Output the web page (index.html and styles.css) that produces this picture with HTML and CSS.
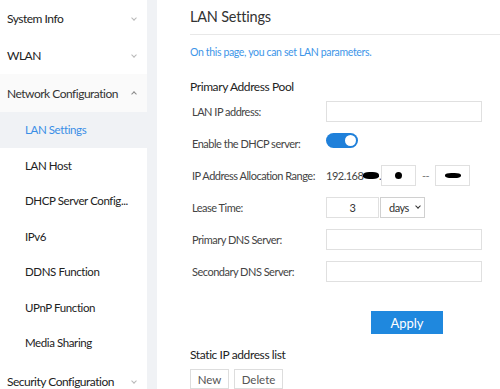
FILE: index.html
```html
<!DOCTYPE html>
<html lang="en">
<head>
  <meta charset="UTF-8" />
  <title>LAN Settings</title>
  <link rel="stylesheet" href="styles.css">
</head>
<body>

  <!-- Side menu -->
  <nav class="sidebar">
    <div class="menu-item">System Info <span class="chev down"></span></div>
    <div class="menu-item">WLAN <span class="chev down"></span></div>
    <div class="menu-item open">Network Configuration <span class="chev up"></span></div>
    <div class="sub-item active">LAN Settings</div>
    <div class="sub-item">LAN Host</div>
    <div class="sub-item">DHCP Server Config...</div>
    <div class="sub-item">IPv6</div>
    <div class="sub-item">DDNS Function</div>
    <div class="sub-item">UPnP Function</div>
    <div class="sub-item">Media Sharing</div>
    <div class="menu-item last">Security Configuration <span class="chev down"></span></div>
  </nav>

  <!-- Main panel -->
  <main class="content">
    <h1 class="page-title">LAN Settings</h1>
    <p class="hint">On this page, you can set LAN parameters.</p>

    <h2 class="section-title">Primary Address Pool</h2>

    <div class="form-row">
      <label>LAN IP address:</label>
      <input class="field wide" type="text">
    </div>
    <div class="form-row">
      <label>Enable the DHCP server:</label>
      <span class="switch"><span class="knob"></span></span>
    </div>
    <div class="form-row">
      <label>IP Address Allocation Range:</label>
      <span class="ip-prefix">192.168<span class="blot b1"></span>.</span>
      <span class="field small"><span class="blot b2"></span></span>
      <span class="dash">--</span>
      <span class="field small"><span class="blot b3"></span></span>
    </div>
    <div class="form-row">
      <label>Lease Time:</label>
      <span class="field lease">3</span>
      <span class="select">days <span class="chev small-chev"></span></span>
    </div>
    <div class="form-row">
      <label>Primary DNS Server:</label>
      <input class="field wide" type="text">
    </div>
    <div class="form-row">
      <label>Secondary DNS Server:</label>
      <input class="field wide" type="text">
    </div>

    <div class="actions">
      <button class="btn-primary">Apply</button>
    </div>

    <h2 class="section-title list-title">Static IP address list</h2>
    <div class="list-actions">
      <button class="btn">New</button>
      <button class="btn">Delete</button>
    </div>
  </main>

</body>
</html>
```

FILE: styles.css
```css
* {
  box-sizing: border-box;
  margin: 0;
  padding: 0;
}

body {
  font-family: 'Lato', 'Liberation Sans', sans-serif;
  height: 100vh;
  overflow: hidden;
  background-color: #f0f2f5;
  color: #222;
  display: flex;
  white-space: nowrap;
}

/* Side menu */
.sidebar {
  width: 147px;
  flex-shrink: 0;
  background: white;
  font-size: 12px;
  letter-spacing: -0.5px;
}

.menu-item {
  height: 37px;
  padding-left: 7px;
  padding-right: 9px;
  display: flex;
  align-items: center;
  justify-content: space-between;
  color: #222;
}

.menu-item.open {
  height: 38px;
  background: #fafafa;
  color: #333;
}

.menu-item.last {
  height: 40px;
  padding-top: 2px;
}

.sub-item {
  height: 35.5px;
  padding-left: 25px;
  display: flex;
  align-items: center;
  font-size: 11.5px;
  letter-spacing: -0.4px;
  color: #222;
}

.sub-item.active {
  background: #f0f2f5;
  color: #3a8ee6;
}

.chev {
  width: 4px;
  height: 4px;
  border-right: 1px solid #b8b8b8;
  border-bottom: 1px solid #b8b8b8;
}

.chev.down {
  transform: rotate(45deg);
  margin-top: -2px;
  margin-right: 2px;
}

.chev.up {
  transform: rotate(-135deg);
  margin-top: 2px;
  margin-right: 2px;
  border-color: #888;
}

/* Main panel */
.content {
  flex: 1;
  margin-left: 10px;
  background: white;
  padding-left: 33px;
}

.page-title {
  font-size: 14.5px;
  font-weight: normal;
  letter-spacing: -0.2px;
  color: #333;
  line-height: 20px;
  padding-top: 7px;
  padding-bottom: 7px;
  border-bottom: 1px solid #e8e8e8;
}

.hint {
  font-size: 10.5px;
  letter-spacing: -0.35px;
  color: #3d95e8;
  margin-top: 9px;
  line-height: 16px;
}

.section-title {
  font-size: 12px;
  font-weight: normal;
  letter-spacing: -0.4px;
  color: #222;
  margin-top: 19px;
  line-height: 16px;
}

.form-row {
  display: flex;
  align-items: center;
  height: 32px;
  font-size: 11px;
  letter-spacing: -0.5px;
  color: #444;
}

.form-row label {
  width: 136px;
  padding-left: 2px;
  flex-shrink: 0;
}

.field {
  height: 21px;
  border: 1px solid #e0e0e0;
  background: white;
  display: inline-flex;
  align-items: center;
  justify-content: center;
  font-size: 11px;
  color: #333;
}

.field.wide {
  width: 156px;
}

.field.small {
  width: 35px;
}

.field.lease {
  width: 53px;
}

.ip-prefix {
  width: 55px;
  display: inline-flex;
  align-items: center;
}

.dash {
  width: 19px;
  text-align: center;
  color: #777;
}

.blot {
  display: inline-block;
  background: black;
  border-radius: 40%;
}

.blot.b1 {
  width: 17px;
  height: 7px;
}

.blot.b2 {
  width: 7px;
  height: 7px;
  border-radius: 50%;
}

.blot.b3 {
  width: 16px;
  height: 5px;
}

.select {
  width: 45px;
  height: 21px;
  margin-left: 1px;
  border: 1px solid #d0d0d0;
  display: inline-flex;
  align-items: center;
  padding-left: 8px;
  gap: 7px;
  color: #333;
}

.small-chev {
  width: 4px;
  height: 4px;
  border-color: #333;
  transform: rotate(45deg);
  margin-top: -3px;
}

.switch {
  width: 32px;
  height: 15px;
  border-radius: 8px;
  background: #1f80da;
  position: relative;
  margin-top: -5px;
}

.switch .knob {
  position: absolute;
  right: 2px;
  top: 2px;
  width: 11px;
  height: 11px;
  border-radius: 50%;
  background: white;
}

.actions {
  padding-left: 181px;
  margin-top: 24px;
}

.btn-primary {
  width: 72px;
  height: 23px;
  border: none;
  background: #1f88de;
  color: white;
  font-family: inherit;
  font-size: 13px;
}

.list-title {
  margin-top: 13px;
}

.list-actions {
  display: flex;
  gap: 5px;
  margin-top: 6px;
}

.btn {
  height: 20px;
  border: 1px solid #ddd;
  background: white;
  color: #555;
  font-family: inherit;
  font-size: 11.5px;
}

.btn:first-child {
  width: 39px;
}

.btn:last-child {
  width: 49px;
}
```
